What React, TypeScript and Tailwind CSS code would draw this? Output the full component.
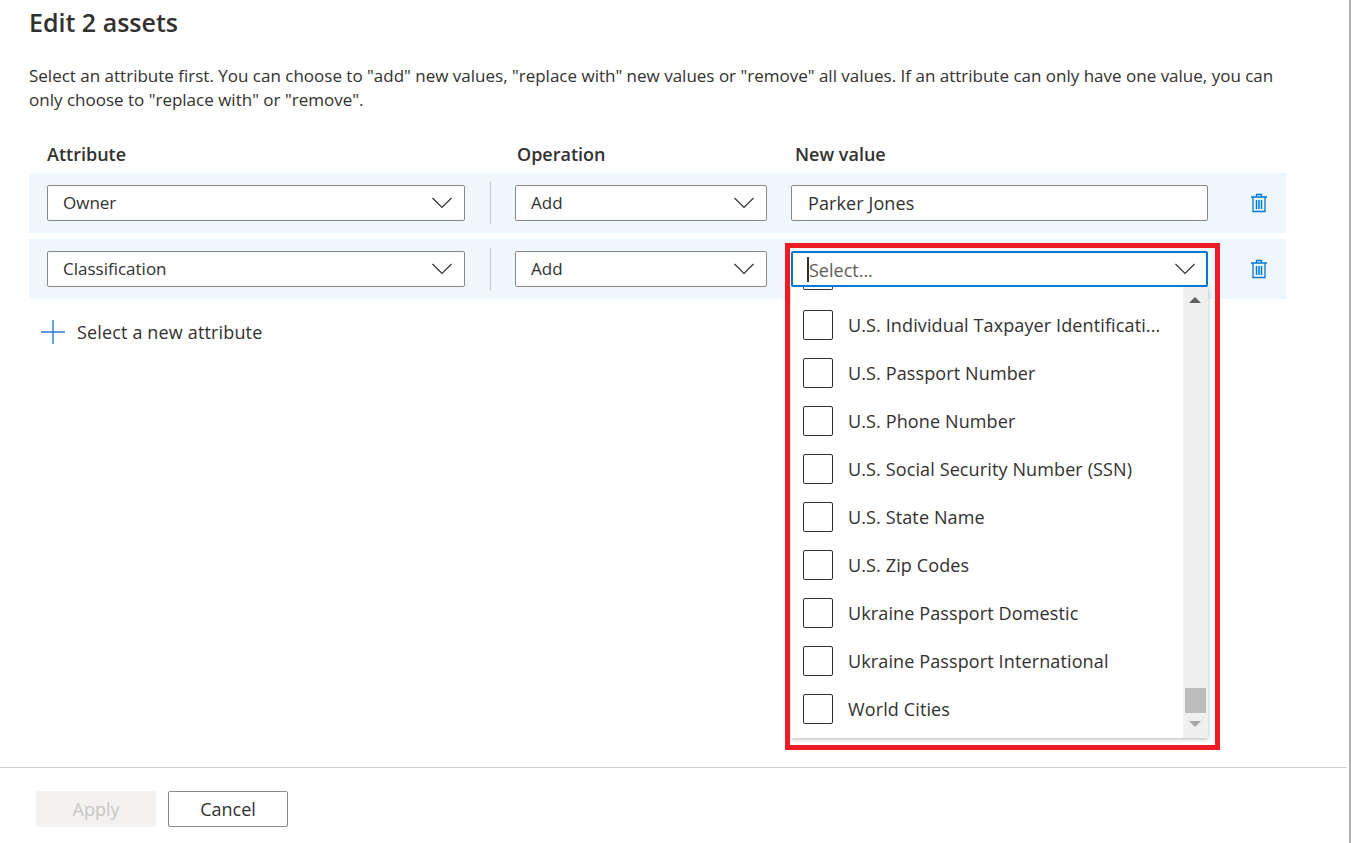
const options = [
  'U.S. Individual Taxpayer Identificati...',
  'U.S. Passport Number',
  'U.S. Phone Number',
  'U.S. Social Security Number (SSN)',
  'U.S. State Name',
  'U.S. Zip Codes',
  'Ukraine Passport Domestic',
  'Ukraine Passport International',
  'World Cities',
];

function Chevron() {
  return (
    <svg width="20" height="12" viewBox="0 0 20 12" fill="none" className="text-[#323130]">
      <path d="M0.5 1L10 10.5L19.5 1" stroke="currentColor" strokeWidth="1.2" />
    </svg>
  );
}

function PlusIcon() {
  return (
    <svg width="24" height="24" viewBox="0 0 24 24" fill="none" className="text-[#2b78d6]">
      <path d="M0 12H24M12 0V24" stroke="currentColor" strokeWidth="1.4" />
    </svg>
  );
}

function TrashIcon() {
  return (
    <svg width="18" height="20" viewBox="0 0 18 20" fill="none" className="text-[#0078d4]">
      <path d="M1 4H17M3 4V18.5H15V4M6.5 4V1.5H11.5V4" stroke="currentColor" strokeWidth="1.3" />
      <path d="M6.5 7V16M9 7V16M11.5 7V16" stroke="currentColor" strokeWidth="1.5" />
    </svg>
  );
}

function SelectBox({ label, width }: { label: string; width: string }) {
  return (
    <div className={`flex h-[36px] items-center justify-between rounded-[2px] border border-[#8a8886] bg-white pl-[15px] pr-[12px] ${width}`}>
      <span className="text-[17px] text-[#323130]">{label}</span>
      <Chevron />
    </div>
  );
}

function Row({ attribute, children }: { attribute: string; children: React.ReactNode }) {
  return (
    <div className="flex h-[60px] items-center bg-[#eff6fc] pl-[18px]">
      <SelectBox label={attribute} width="w-[418px]" />
      <div className="ml-[25px] h-[42px] w-px bg-[#c8c6c4]" />
      <div className="ml-[24px]">
        <SelectBox label="Add" width="w-[252px]" />
      </div>
      {children}
      <div className="ml-[42px]">
        <TrashIcon />
      </div>
    </div>
  );
}

export default function App() {
  return (
    <div className="flex h-[843px] w-full flex-col overflow-hidden border-r-2 border-[#b0b0b0] bg-white font-['Open_Sans','Liberation_Sans',sans-serif] text-[#323130]">
      <div className="flex-1 pl-[29px] pr-[63px]">
        <h1 className="mt-[5px] text-[25px] leading-[34px] font-semibold">Edit 2 assets</h1>
        <p className="mt-[25px] text-[17px] leading-[24px]">
          Select an attribute first. You can choose to "add" new values, "replace with" new values or "remove" all values. If an attribute can only have one value, you can only choose to "replace with" or "remove".
        </p>

        <div className="mt-[30px] flex h-[24px] items-center text-[18px] font-semibold">
          <span className="ml-[18px] w-[470px]">Attribute</span>
          <span className="w-[278px]">Operation</span>
          <span>New value</span>
        </div>

        <div className="mt-[7px] flex flex-col gap-[6px]">
          <Row attribute="Owner">
            <div className="ml-[24px] flex h-[36px] w-[417px] items-center rounded-[2px] border border-[#8a8886] bg-white pl-[16px] text-[18px] tracking-[0.1px]">
              Parker Jones
            </div>
          </Row>
          <Row attribute="Classification">
            <div className="ml-[24px] h-[36px] w-[417px]" />
          </Row>
        </div>

        <div className="mt-[17px] flex h-[32px] items-center pl-[12px]">
          <PlusIcon />
          <span className="ml-[12px] text-[18px] tracking-[0.15px]">Select a new attribute</span>
        </div>
      </div>

      <div className="mr-[2px] flex h-[76px] gap-[12px] border-t border-[#d2d0ce] pl-[36px] pt-[23px]">
        <button className="h-[36px] w-[120px] rounded-[2px] bg-[#f3f2f1] pt-[1px] text-[18px] text-[#c8c6c4]">Apply</button>
        <button className="h-[36px] w-[120px] rounded-[2px] border border-[#8a8886] bg-white pt-[1px] text-[18px]">Cancel</button>
      </div>

      {/* opened combobox sits over the rows */}
      <div className="absolute top-[251px] left-[791px] flex h-[487px] w-[417px] flex-col">
        <div className="z-10 flex h-[36px] items-center justify-between rounded-[2px] border-2 border-[#0078d4] bg-white pl-[14px] pr-[11px]">
          <span className="border-l-2 border-[#323130] pt-[1px] text-[18px] leading-[24px] text-[#605e5c]">Select...</span>
          <Chevron />
        </div>
        <div className="flex flex-1 overflow-hidden bg-white shadow-[0_1px_4px_rgba(0,0,0,0.3)]">
          <div className="flex-1 overflow-hidden">
            <div className="-mt-[3px] ml-[12px] h-[6px] w-[30px] rounded-b-[2px] border border-t-0 border-[#323130]" />
            <div className="mt-[20px] flex flex-col gap-[18px]">
              {options.map((o) => (
                <div key={o} className="flex h-[30px] items-center pl-[12px]">
                  <div className="h-[30px] w-[30px] shrink-0 rounded-[2px] border border-[#323130]" />
                  <span className="ml-[15px] whitespace-nowrap text-[18px] tracking-[0.12px]">{o}</span>
                </div>
              ))}
            </div>
          </div>
          <div className="relative w-[25px] bg-[#f0f0f0]">
            <div className="absolute top-[10px] left-[6px] h-0 w-0 border-x-[6px] border-b-[6px] border-x-transparent border-b-[#606060]" />
            <div className="absolute top-[401px] left-[2px] h-[25px] w-[21px] bg-[#bcbcbc]" />
            <div className="absolute top-[434px] left-[6px] h-0 w-0 border-x-[6px] border-t-[6px] border-x-transparent border-t-[#a8a8a8]" />
          </div>
        </div>
      </div>

      {/* red callout drawn over the screenshot */}
      <div className="pointer-events-none absolute top-[243px] left-[785px] h-[507px] w-[435px] border-[5px] border-[#ed1c24]" />
    </div>
  );
}
